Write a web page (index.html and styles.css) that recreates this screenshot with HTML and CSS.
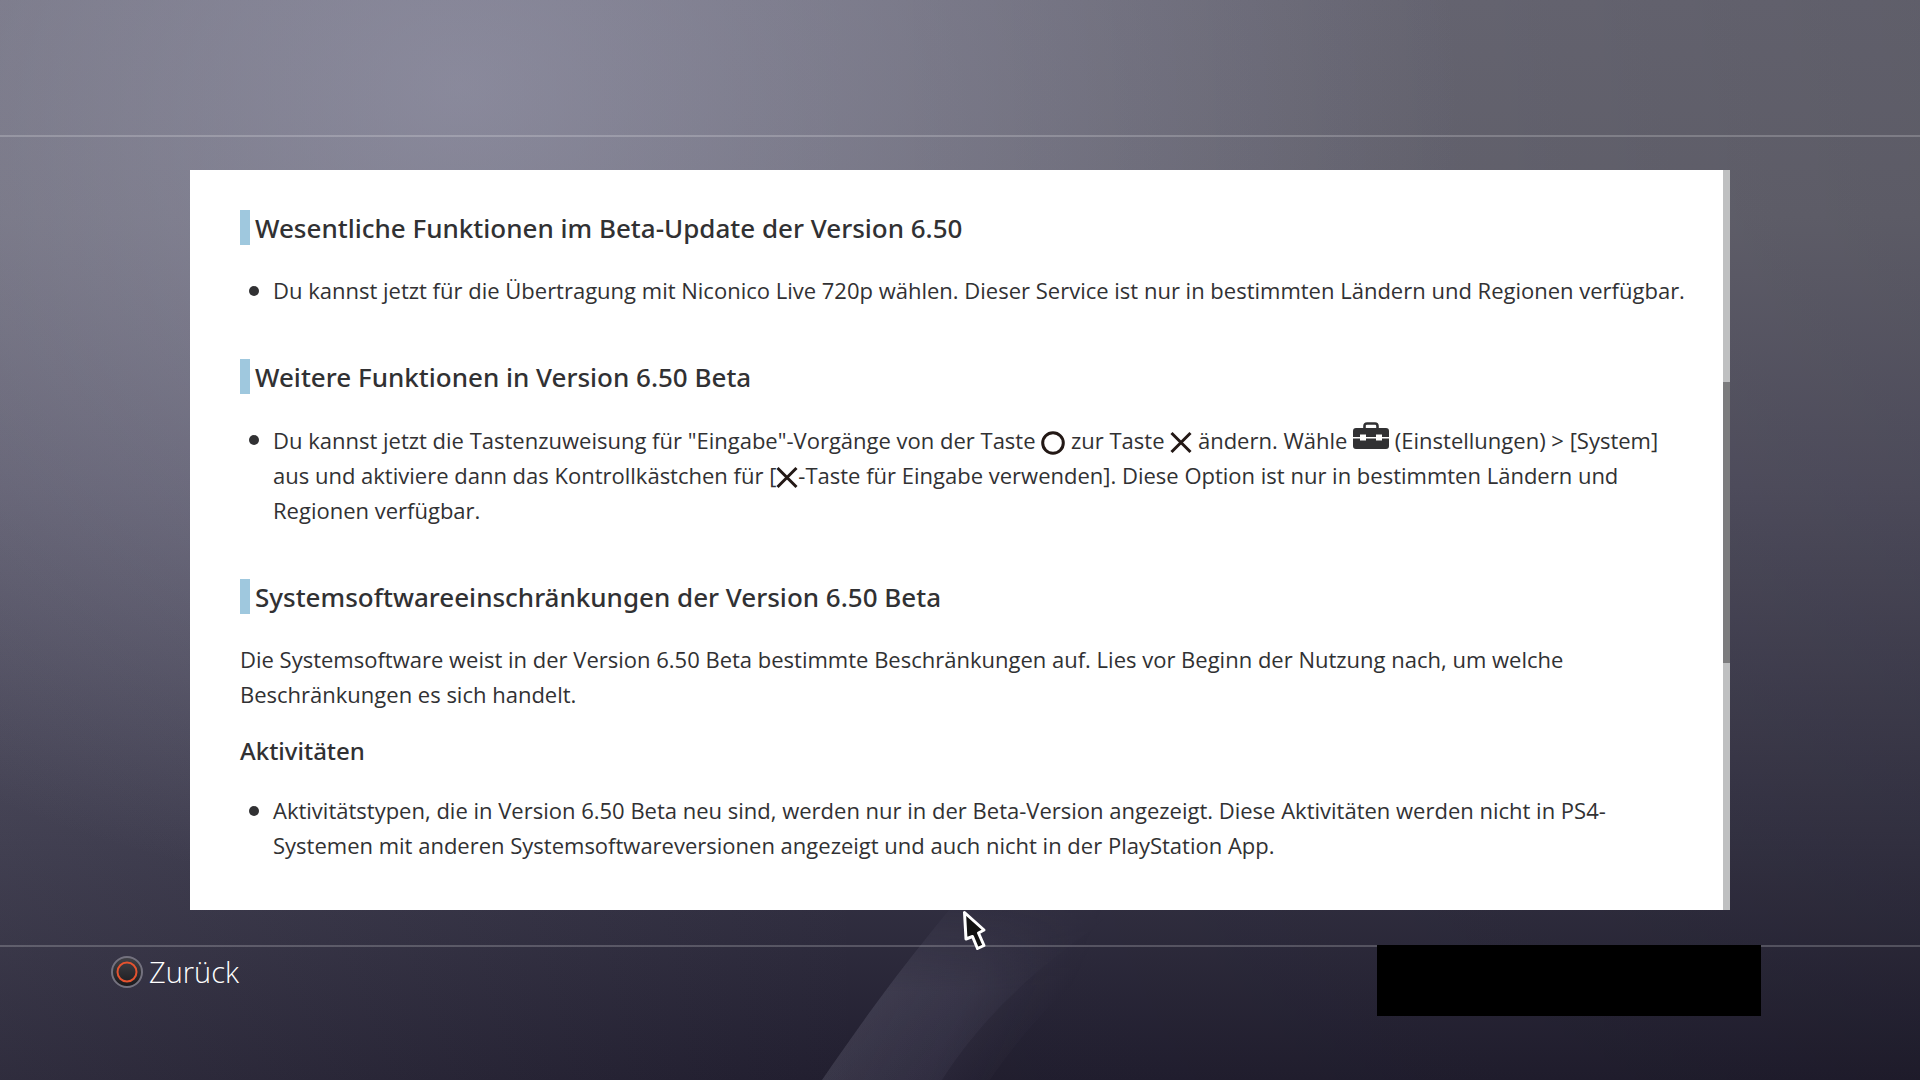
FILE: index.html
```html
<!DOCTYPE html>
<html lang="de">
<head>
    <meta charset="UTF-8">
    <title>Systemsoftware 6.50 Beta</title>
    <link rel="stylesheet" href="styles.css">
</head>
<body>
    <svg class="wave" viewBox="0 0 1920 1080" preserveAspectRatio="none" aria-hidden="true">
        <defs>
            <linearGradient id="beam" gradientUnits="userSpaceOnUse" x1="860" y1="1000" x2="1030" y2="1080">
                <stop offset="0" stop-color="#a09fb4" stop-opacity="0.1"/>
                <stop offset="0.5" stop-color="#9a98b8" stop-opacity="0.07"/>
                <stop offset="1" stop-color="#9a98b8" stop-opacity="0"/>
            </linearGradient>
            <linearGradient id="fade" x1="0" y1="0" x2="0" y2="1">
                <stop offset="0" stop-color="#fff" stop-opacity="0.1"/>
                <stop offset="0.5" stop-color="#fff"/>
            </linearGradient>
            <mask id="beamMask"><rect x="800" y="905" width="420" height="175" fill="url(#fade)"/></mask>
        </defs>
        <g mask="url(#beamMask)">
            <path d="M822 1080 C860 1025 890 982 953 905 L1130 905 C1040 960 980 1020 942 1080 Z" fill="url(#beam)"/>
            <path d="M822 1080 C860 1025 890 982 953 905 L1180 905 C1090 960 1030 1020 990 1080 Z" fill="url(#beam)"/>
        </g>
    </svg>
    <header class="top"></header>
    <main class="panel">
        <article class="content">
            <h2>Wesentliche Funktionen im Beta-Update der Version 6.50</h2>
            <ul>
                <li>Du kannst jetzt für die Übertragung mit Niconico Live 720p wählen. Dieser Service ist nur in bestimmten Ländern und Regionen verfügbar.</li>
            </ul>
            <h2>Weitere Funktionen in Version 6.50 Beta</h2>
            <ul>
                <li>Du kannst jetzt die Tastenzuweisung für "Eingabe"-Vorgänge von der Taste <svg class="key" viewBox="0 0 24 24"><circle cx="12" cy="12" r="10.3"/></svg> zur Taste <svg class="key cross" viewBox="0 0 22 24"><path d="M1.5 2 L20.5 21 M20.5 2 L1.5 21"/></svg> ändern. Wähle <svg class="toolbox" viewBox="0 0 36 27"><path d="M11.5 7 V4 Q11.5 1.5 14 1.5 H22 Q24.5 1.5 24.5 4 V7" fill="none" stroke="#313133" stroke-width="2.6"/><path d="M3 6 H33 Q36 6 36 9 V15 H29 V12.5 H23 V15 H13 V12.5 H7 V15 H0 V9 Q0 6 3 6 Z M0 16.5 H7 V18.5 H13 V16.5 H23 V18.5 H29 V16.5 H36 V24 Q36 27 33 27 H3 Q0 27 0 24 Z"/></svg> (Einstellungen) &gt; [System] aus und aktiviere dann das Kontrollkästchen für [<svg class="key cross" viewBox="0 0 22 24"><path d="M1.5 2 L20.5 21 M20.5 2 L1.5 21"/></svg>-Taste für Eingabe verwenden]. Diese Option ist nur in bestimmten Ländern und Regionen verfügbar.</li>
            </ul>
            <h2>Systemsoftwareeinschränkungen der Version 6.50 Beta</h2>
            <p>Die Systemsoftware weist in der Version 6.50 Beta bestimmte Beschränkungen auf. Lies vor Beginn der Nutzung nach, um welche Beschränkungen es sich handelt.</p>
            <h3>Aktivitäten</h3>
            <ul>
                <li>Aktivitätstypen, die in Version 6.50 Beta neu sind, werden nur in der Beta-Version angezeigt. Diese Aktivitäten werden nicht in PS4-Systemen mit anderen Systemsoftwareversionen angezeigt und auch nicht in der PlayStation App.</li>
            </ul>
        </article>
        <div class="scrollbar"><div class="thumb"></div></div>
    </main>
    <footer class="bottom">
        <button class="back" type="button">
            <svg class="circle" viewBox="0 0 32 32">
                <defs>
                    <linearGradient id="btn" x1="0" y1="0" x2="0" y2="1">
                        <stop offset="0" stop-color="#424248"/>
                        <stop offset="1" stop-color="#19191c"/>
                    </linearGradient>
                </defs>
                <circle cx="16" cy="16" r="15" fill="url(#btn)" stroke="#74727f" stroke-width="2"/>
                <circle cx="16" cy="16" r="9.5" fill="none" stroke="#e5532f" stroke-width="2"/>
            </svg>
            Zurück
        </button>
        <div class="blackbox"></div>
    </footer>
    <svg class="cursor" viewBox="0 0 26 42" aria-hidden="true"><path d="M2.5 2.5 L22 20 L16.5 23 L22 35.5 L15.5 38.5 L10.5 26.5 L4 29 Z"/></svg>
</body>
</html>
```

FILE: styles.css
```css
body {
    margin: 0;
    min-height: 100vh;
    display: flex;
    flex-direction: column;
    font-family: "Open Sans", "Noto Sans", sans-serif;
    color: #313133;
    background:
        radial-gradient(ellipse 52% 75% at 24% 8%, rgba(158, 158, 180, 0.6), rgba(140, 140, 165, 0) 100%),
        linear-gradient(to right, rgba(150, 150, 165, 0.12), rgba(0, 0, 0, 0) 45%, rgba(0, 0, 0, 0.1)),
        linear-gradient(to bottom, #6a6976 0%, #666571 20%, #545263 45%, #363446 78%, #211e2f 100%);
}

.wave {
    position: absolute;
    left: 0;
    top: 0;
    width: 100%;
    height: 100%;
    z-index: -1;
}

.top {
    height: 135px;
    border-bottom: 2px solid rgba(255, 255, 255, 0.2);
}

.panel {
    display: flex;
    margin: 33px 190px 35px;
    background: #fff;
}

.content {
    flex: 1;
    padding: 40px 32px 47px 50px;
}

h2 {
    box-sizing: border-box;
    height: 35px;
    margin: 0 0 28px;
    padding: 1px 0 0 5px;
    border-left: 10px solid #9fc8de;
    font-family: "Noto Sans", "Open Sans", sans-serif;
    font-size: 26px;
    font-weight: 500;
    line-height: 34px;
}

h3 {
    margin: 22px 0 25px;
    font-family: "Noto Sans", "Open Sans", sans-serif;
    font-size: 24px;
    font-weight: 500;
    line-height: 34px;
}

ul {
    list-style: none;
    margin: 0 0 51px;
    padding: 0;
}

ul:last-child {
    margin-bottom: 0;
}

li {
    position: relative;
    padding-left: 33px;
    font-size: 22px;
    line-height: 35px;
}

li::before {
    content: "";
    position: absolute;
    left: 9px;
    top: 13px;
    width: 10px;
    height: 10px;
    border-radius: 50%;
    background: #313133;
}

p {
    margin: 0;
    font-size: 22px;
    line-height: 35px;
}

.key {
    width: 24px;
    height: 24px;
    vertical-align: -6px;
    fill: none;
    stroke: #231815;
    stroke-width: 3;
}

.cross {
    width: 22px;
}

.toolbox {
    width: 36px;
    height: 27px;
    vertical-align: 0;
    fill: #313133;
}

.scrollbar {
    width: 7px;
    padding: 212px 0 247px;
    box-sizing: border-box;
    display: flex;
    background: #bfc0c1;
}

.thumb {
    flex: 1;
    background: #7c7c7e;
}

.bottom {
    flex: 1;
    display: flex;
    justify-content: space-between;
    align-items: flex-start;
    padding: 0 159px 0 111px;
    box-shadow: inset 0 2px rgba(255, 255, 255, 0.2);
}

.back {
    display: flex;
    align-items: center;
    gap: 6px;
    margin-top: 7px;
    padding: 0;
    border: none;
    background: none;
    color: #fff;
    font-family: "Open Sans", "Noto Sans", sans-serif;
    font-size: 29px;
    font-weight: 300;
    cursor: pointer;
}

.circle {
    width: 32px;
    height: 32px;
}

.blackbox {
    width: 384px;
    height: 71px;
    background: #000;
}

.cursor {
    position: absolute;
    left: 962px;
    top: 910px;
    width: 26px;
    height: 42px;
    fill: #111;
    stroke: #fff;
    stroke-width: 3;
    stroke-linejoin: round;
}
```
